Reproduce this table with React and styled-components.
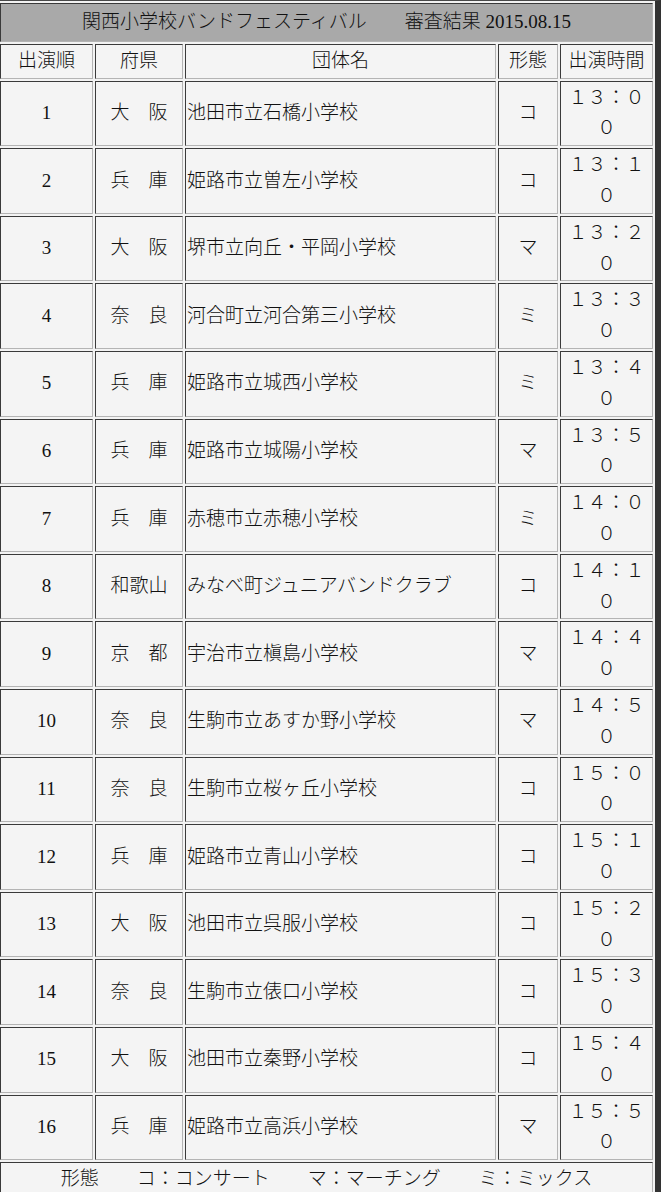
import React from "react";
import styled, { createGlobalStyle } from "styled-components";

const GlobalStyle = createGlobalStyle`
  html, body {
    margin: 0;
    padding: 0;
    background: #f3f3f3;
    overflow: hidden;
  }
`;

const Table = styled.table`
  margin-left: -2px;
  width: 663px;
  table-layout: fixed;
  border-collapse: separate;
  border-spacing: 2px;
  border-top: 1px solid #4a4a4a;
  border-right: 6px solid #333;
  border-left: 0;
  border-bottom: 0;
  font-family: "Liberation Serif", "Noto Sans CJK JP", serif;
  font-size: 19px;
  font-weight: 300;
  color: #111;
`;

const Col = styled.col`
  width: ${(p) => p.$w}px;
`;

const Cell = styled.td`
  box-sizing: border-box;
  padding: 1px;
  line-height: 30.8px;
  border-top: 1px solid #3a3a3a;
  border-left: 1px solid #3a3a3a;
  border-bottom: 1px solid #b4b4b4;
  border-right: 1px solid #b4b4b4;
  background: #f4f4f4;
  text-align: ${(p) => p.$align || "center"};
  vertical-align: middle;
  font-weight: 300;
`;

const TitleCell = styled(Cell).attrs({ as: "th" })`
  padding: 3px 1px;
  background: #a9a9a9;
`;

const HeadCell = styled(Cell).attrs({ as: "th" })``;

const rows = [
  ["1", "大　阪", "池田市立石橋小学校", "コ", "１３：００"],
  ["2", "兵　庫", "姫路市立曽左小学校", "コ", "１３：１０"],
  ["3", "大　阪", "堺市立向丘・平岡小学校", "マ", "１３：２０"],
  ["4", "奈　良", "河合町立河合第三小学校", "ミ", "１３：３０"],
  ["5", "兵　庫", "姫路市立城西小学校", "ミ", "１３：４０"],
  ["6", "兵　庫", "姫路市立城陽小学校", "マ", "１３：５０"],
  ["7", "兵　庫", "赤穂市立赤穂小学校", "ミ", "１４：００"],
  ["8", "和歌山", "みなべ町ジュニアバンドクラブ", "コ", "１４：１０"],
  ["9", "京　都", "宇治市立槇島小学校", "マ", "１４：４０"],
  ["10", "奈　良", "生駒市立あすか野小学校", "マ", "１４：５０"],
  ["11", "奈　良", "生駒市立桜ヶ丘小学校", "コ", "１５：００"],
  ["12", "兵　庫", "姫路市立青山小学校", "コ", "１５：１０"],
  ["13", "大　阪", "池田市立呉服小学校", "コ", "１５：２０"],
  ["14", "奈　良", "生駒市立俵口小学校", "コ", "１５：３０"],
  ["15", "大　阪", "池田市立秦野小学校", "コ", "１５：４０"],
  ["16", "兵　庫", "姫路市立高浜小学校", "マ", "１５：５０"],
];

const App = () => {
  return (
    <>
      <GlobalStyle />
      <Table>
        <colgroup>
          <Col $w={93} />
          <Col $w={88} />
          <Col $w={311} />
          <Col $w={60} />
          <Col $w={93} />
        </colgroup>
        <thead>
          <tr>
            <TitleCell colSpan={5}>
              関西小学校バンドフェスティバル　　審査結果 2015.08.15
            </TitleCell>
          </tr>
          <tr>
            <HeadCell>出演順</HeadCell>
            <HeadCell>府県</HeadCell>
            <HeadCell>団体名</HeadCell>
            <HeadCell>形態</HeadCell>
            <HeadCell>出演時間</HeadCell>
          </tr>
        </thead>
        <tbody>
          {rows.map(([no, pref, name, kind, time]) => (
            <tr key={no}>
              <Cell>{no}</Cell>
              <Cell>{pref}</Cell>
              <Cell $align="left">{name}</Cell>
              <Cell>{kind}</Cell>
              <Cell>{time}</Cell>
            </tr>
          ))}
          <tr>
            <Cell colSpan={5}>
              形態　　コ：コンサート　　マ：マーチング　　ミ：ミックス
            </Cell>
          </tr>
        </tbody>
      </Table>
    </>
  );
};

export default App;
